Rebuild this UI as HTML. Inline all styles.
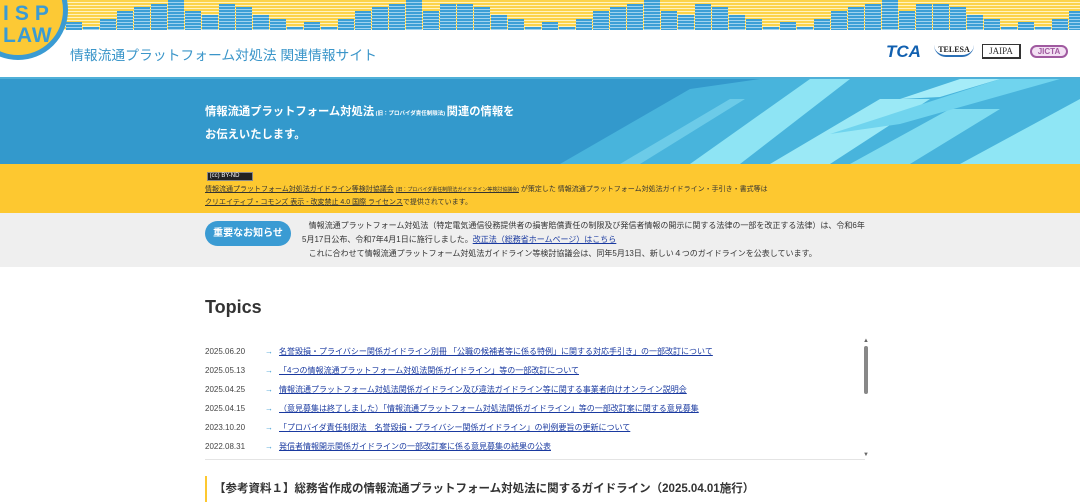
<!DOCTYPE html>
<html><head><meta charset="utf-8"><style>
*{margin:0;padding:0;box-sizing:border-box}
body{width:1080px;height:502px;overflow:hidden;background:#fff;font-family:"Liberation Sans","Noto Sans CJK JP",sans-serif;position:relative;color:#333}
#eq{position:absolute;left:0;top:0;width:1080px;height:30px;background:repeating-linear-gradient(#fcd34a 0 2px,#fff3c0 2px 3px)}
.bar{position:absolute;bottom:0;width:16px;background:repeating-linear-gradient(#3c9fd6 0 2px,#9fd3ee 2px 3px)}
#logo{position:absolute;left:-32px;top:-40px;width:100px;height:100px;border-radius:50%;background:#fcc935;border:5px solid #3a9bd3;overflow:hidden}
#logo div{position:absolute;left:30px;color:#3a9bd3;font-weight:bold;font-size:21px;line-height:22px;letter-spacing:1px}
.title{position:absolute;left:70px;top:44px;font-size:13.8px;color:#3a95c9}
#banner{position:absolute;top:79px;left:0;width:1080px;height:85px;background:#3399cc;overflow:hidden}
#banner p{position:absolute;left:205px;color:#fff;font-weight:bold;font-size:11.3px}
#yel{position:absolute;top:164px;left:0;width:1080px;height:49px;background:#fdc830;font-size:7px;color:#333}
#yel a{color:#333;text-decoration:underline}
#gray{position:absolute;top:213px;left:0;width:1080px;height:54px;background:#efefef;font-size:8px;line-height:14px;color:#333}
.btn{position:absolute;left:205px;top:8px;width:86px;height:25px;border-radius:13px;background:#3a9bd3;color:#fff;font-weight:bold;font-size:10px;text-align:center;line-height:25px}
h2{position:absolute;left:205px;top:297px;font-size:18px;font-weight:bold;color:#333}
.row{position:absolute;left:205px;font-size:8px;height:12px;line-height:12px}
.row .d{display:inline-block;width:60px;color:#444}
.row .ar{display:inline-block;width:14px;color:#3a9bd3;font-weight:bold}
.row a{color:#1a3aa0;text-decoration:underline}
</style></head><body>
<div id="eq"></div>
<div id="logo"><div style="top:38px;letter-spacing:6px">ISP</div><div style="top:60px">LAW</div></div>
<div class="title">情報流通プラットフォーム対処法 関連情報サイト</div>
<div style="position:absolute;left:886px;top:42px;font:italic bold 17px 'Liberation Sans',sans-serif;color:#1160b0">TCA</div>
<div style="position:absolute;left:934px;top:45px;width:40px;height:12px;border-bottom:2px solid #2a6fb5;border-radius:0 0 20px 20px;font:bold 8px 'Liberation Serif',serif;color:#222;text-align:center">TELESA</div>
<div style="position:absolute;left:982px;top:44px;width:39px;height:15px;border:1px solid #333;border-right-width:2px;border-bottom-width:2px;font:9px 'Liberation Serif',serif;text-align:center;line-height:13px">JAIPA</div>
<div style="position:absolute;left:1030px;top:45px;width:38px;height:13px;border:2px solid #a05aa0;border-radius:7px;background:#f3e0f3;font:bold 8px sans-serif;color:#a05aa0;text-align:center;line-height:9px">JICTA</div>
<div style="position:absolute;top:77px;left:0;width:1080px;height:2px;background:#4fb0d8"></div>
<div id="banner">
<svg width="1080" height="85" style="position:absolute;left:0;top:0">
<polygon points="560,85 690,10 760,0 1080,0 1080,85" fill="#48b4dc"/>
<polygon points="690,85 810,0 850,0 740,85" fill="#8ee4f4"/>
<polygon points="770,85 880,20 930,20 830,85" fill="#9be9f6"/>
<polygon points="850,85 950,30 1000,30 910,85" fill="#7fdcf0"/>
<polygon points="830,55 1000,0 1060,0 900,45" fill="#70d4ee"/>
<polygon points="960,85 1080,20 1080,85" fill="#8fe6f5"/>
<polygon points="900,20 960,0 1000,0 940,18" fill="#a5ecf8"/>
<polygon points="620,85 730,20 745,20 640,85" fill="#6ccbe8"/>
</svg>
<p style="top:24px">情報流通プラットフォーム対処法<span style="font-size:5.5px"> (旧：プロバイダ責任制限法) </span>関連の情報を</p>
<p style="top:47px">お伝えいたします。</p>
</div>
<div id="yel">
<div style="position:absolute;left:207px;top:8px;width:46px;height:9px;background:#222;border:1px solid #888;color:#fff;font-size:6px;line-height:7px">&nbsp;(cc) BY-ND</div>
<div style="position:absolute;left:205px;top:20px"><a>情報流通プラットフォーム対処法ガイドライン等検討協議会</a> <a style="font-size:5px">(旧：プロバイダ責任制限法ガイドライン等検討協議会)</a> が策定した 情報流通プラットフォーム対処法ガイドライン・手引き・書式等は</div>
<div style="position:absolute;left:205px;top:33px"><a>クリエイティブ・コモンズ 表示 - 改変禁止 4.0 国際 ライセンス</a>で提供されています。</div>
</div>
<div id="gray">
<div class="btn">重要なお知らせ</div>
<div style="position:absolute;left:302px;top:6px;width:570px">&nbsp;&nbsp;&nbsp;情報流通プラットフォーム対処法（特定電気通信役務提供者の損害賠償責任の制限及び発信者情報の開示に関する法律の一部を改正する法律）は、令和6年<br>5月17日公布、令和7年4月1日に施行しました。<a style="color:#1a3aa0;text-decoration:underline">改正法（総務省ホームページ）はこちら</a><br>&nbsp;&nbsp;&nbsp;これに合わせて情報流通プラットフォーム対処法ガイドライン等検討協議会は、同年5月13日、新しい４つのガイドラインを公表しています。</div>
</div>
<h2>Topics</h2>
<div class="row" style="top:346px"><span class="d">2025.06.20</span><span class="ar">→</span><a>名誉毀損・プライバシー関係ガイドライン別冊 「公職の候補者等に係る特例」に関する対応手引き」の一部改訂について</a></div>
<div class="row" style="top:365px"><span class="d">2025.05.13</span><span class="ar">→</span><a>「4つの情報流通プラットフォーム対処法関係ガイドライン」等の一部改訂について</a></div>
<div class="row" style="top:384px"><span class="d">2025.04.25</span><span class="ar">→</span><a>情報流通プラットフォーム対処法関係ガイドライン及び違法ガイドライン等に関する事業者向けオンライン説明会</a></div>
<div class="row" style="top:403px"><span class="d">2025.04.15</span><span class="ar">→</span><a>（意見募集は終了しました）「情報流通プラットフォーム対処法関係ガイドライン」等の一部改訂案に関する意見募集</a></div>
<div class="row" style="top:422px"><span class="d">2023.10.20</span><span class="ar">→</span><a>「プロバイダ責任制限法　名誉毀損・プライバシー関係ガイドライン」の判例要旨の更新について</a></div>
<div class="row" style="top:441px"><span class="d">2022.08.31</span><span class="ar">→</span><a>発信者情報開示関係ガイドラインの一部改訂案に係る意見募集の結果の公表</a></div>
<div style="position:absolute;left:863px;top:338px;font-size:6px;color:#666">▲</div>
<div style="position:absolute;left:864px;top:346px;width:4px;height:48px;border-radius:2px;background:#888"></div>
<div style="position:absolute;left:863px;top:452px;font-size:6px;color:#666">▼</div>
<div style="position:absolute;left:205px;top:459px;width:660px;height:1px;background:#e4e4e4"></div>
<div style="position:absolute;left:205px;top:476px;width:2px;height:26px;background:#fdc830"></div>
<div style="position:absolute;left:214px;top:480px;font-size:11.5px;font-weight:bold;color:#333">【参考資料１】総務省作成の情報流通プラットフォーム対処法に関するガイドライン（2025.04.01施行）</div>
<script>
var t=[4,4,7,15,19,27,22,27,19,11,7,4,0,11,15,4,7,15,19,27,22,27,19,11,7,4,0,11];
var eq=document.getElementById('eq'),x=66,i=0;
while(x<1080){var b=document.createElement('div');b.className='bar';b.style.left=x+'px';b.style.height=(30-t[(i+6)%t.length])+'px';eq.appendChild(b);x+=17;i++;}
</script>
</body></html>
